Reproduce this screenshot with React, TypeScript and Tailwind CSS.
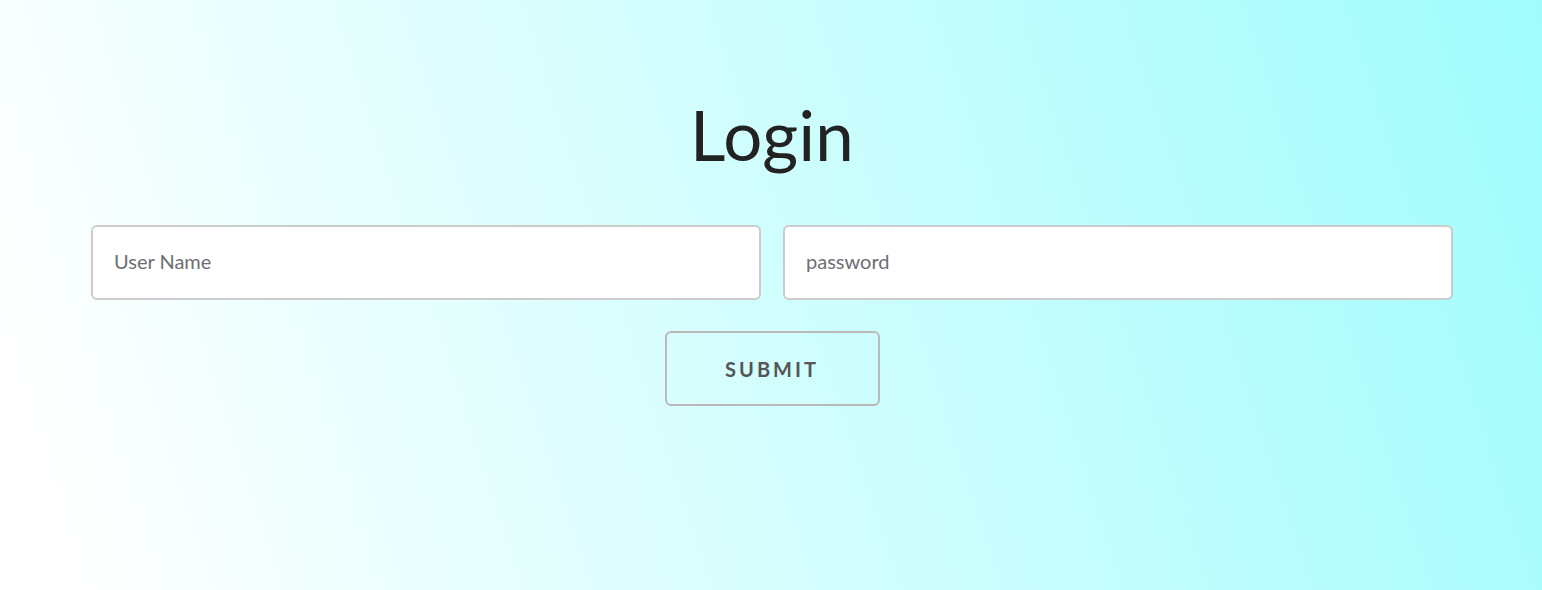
import React from "react";

export default function App() {
  return (
    <div className="min-h-screen w-full bg-[linear-gradient(72deg,#ffffff_4%,#a0fcfc_100%)] flex flex-col items-center pl-[91px] pr-[89px] font-['Lato','Noto_Sans',sans-serif]">
      <h1 className="mt-[100px] text-[69px] leading-none font-normal text-[#222222] tracking-[0.2px]">
        Login
      </h1>
      <form
        className="w-full flex flex-col items-center"
        onSubmit={(e) => e.preventDefault()}
      >
        <div className="w-full flex gap-[22px] mt-[56px]">
          <input
            type="text"
            placeholder="User Name"
            className="flex-1 min-w-0 h-[75px] bg-white border-2 border-[#cccccc] rounded-[6px] px-[21px] pb-[3px] text-[20px] text-[#333] placeholder:text-[#6e6e73] outline-none"
          />
          <input
            type="password"
            placeholder="password"
            className="flex-1 min-w-0 h-[75px] bg-white border-2 border-[#cccccc] rounded-[6px] px-[21px] pb-[3px] text-[20px] text-[#333] placeholder:text-[#6e6e73] outline-none"
          />
        </div>
        <button
          type="submit"
          className="mt-[31px] w-[215px] h-[75px] border-2 border-[#b9b9b9] rounded-[6px] bg-transparent text-[20px] font-bold tracking-[3px] text-[#555555]"
        >
          SUBMIT
        </button>
      </form>
    </div>
  );
}
